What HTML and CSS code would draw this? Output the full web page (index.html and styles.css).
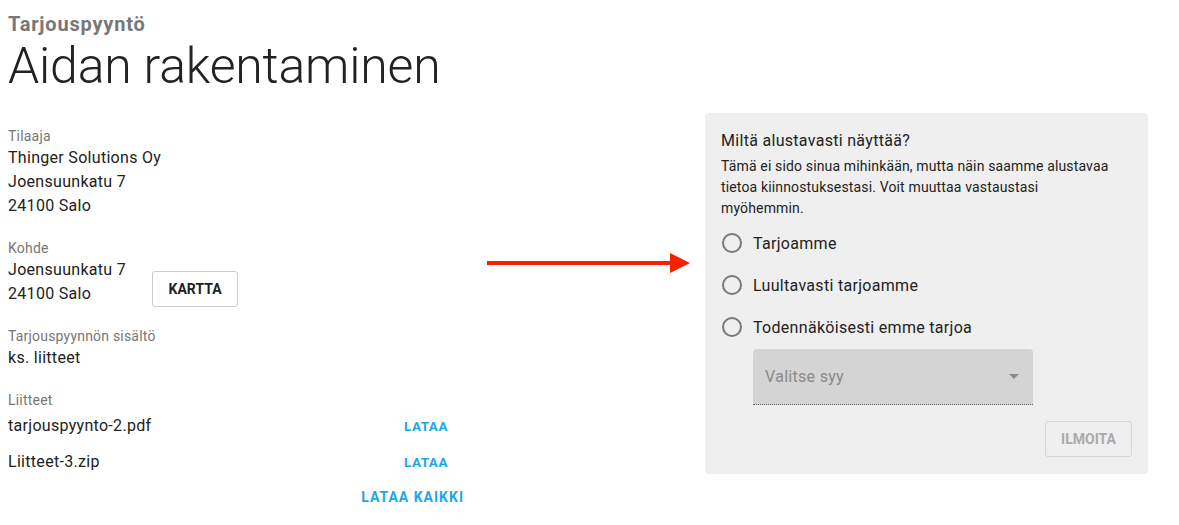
FILE: index.html
```html
<!DOCTYPE html>
<html lang="fi">
<head>
<meta charset="utf-8">
<title>Tarjouspyyntö</title>
<link rel="stylesheet" href="styles.css">
</head>
<body>
<header class="head">
  <div class="kicker">Tarjouspyyntö</div>
  <h1 class="title">Aidan rakentaminen</h1>
</header>
<main class="layout">
  <section class="details">
    <div class="block">
      <div class="label">Tilaaja</div>
      <div class="value">Thinger Solutions Oy</div>
      <div class="value">Joensuunkatu 7</div>
      <div class="value">24100 Salo</div>
    </div>
    <div class="block">
      <div class="label">Kohde</div>
      <div class="row-addr">
        <div>
          <div class="value">Joensuunkatu 7</div>
          <div class="value">24100 Salo</div>
        </div>
        <button class="btn-outline">KARTTA</button>
      </div>
    </div>
    <div class="block">
      <div class="label">Tarjouspyynnön sisältö</div>
      <div class="value">ks. liitteet</div>
    </div>
    <div class="block files">
      <div class="label">Liitteet</div>
      <div class="file"><span class="value">tarjouspyynto-2.pdf</span><a class="link">LATAA</a></div>
      <div class="file"><span class="value">Liitteet-3.zip</span><a class="link">LATAA</a></div>
      <div class="file all"><a class="link">LATAA KAIKKI</a></div>
    </div>
  </section>
  <div class="arrow-col">
    <svg class="arrow" width="204" height="22" viewBox="0 0 204 22">
      <rect x="0" y="9" width="184" height="4" fill="#f42200"/>
      <polygon points="183,1 203,11 183,21" fill="#f42200"/>
    </svg>
  </div>
  <aside class="panel">
    <h2 class="panel-title">Miltä alustavasti näyttää?</h2>
    <p class="panel-text">Tämä ei sido sinua mihinkään, mutta näin saamme alustavaa tietoa kiinnostuksestasi. Voit muuttaa vastaustasi myöhemmin.</p>
    <div class="options">
      <label class="opt"><span class="radio"></span>Tarjoamme</label>
      <label class="opt"><span class="radio"></span>Luultavasti tarjoamme</label>
      <label class="opt"><span class="radio"></span>Todennäköisesti emme tarjoa</label>
    </div>
    <div class="select">
      <span>Valitse syy</span>
      <span class="caret"></span>
    </div>
    <div class="actions">
      <button class="btn-disabled">ILMOITA</button>
    </div>
  </aside>
</main>
</body>
</html>
```

FILE: styles.css
```css
* { box-sizing: border-box; }
body {
  margin: 0;
  padding: 0 8px;
  font-family: Roboto, "Liberation Sans", sans-serif;
  color: #222;
  background: #fff;
}
.head { padding-top: 11px; }
.kicker {
  font-size: 20px;
  font-weight: 700;
  color: #777;
  line-height: 26px;
  letter-spacing: 0.8px;
}
.title {
  margin: 0;
  font-size: 50px;
  font-weight: 300;
  line-height: 58px;
  color: #222;
  letter-spacing: -0.2px;
}
.layout {
  display: flex;
  align-items: flex-start;
  margin-top: 18px;
}
.details {
  width: 456px;
  padding-top: 13px;
}
.block { margin-bottom: 20px; }
.label {
  font-size: 14px;
  color: #777;
  line-height: 20px;
  letter-spacing: 0.2px;
}
.value {
  font-size: 16px;
  line-height: 24px;
  color: #222;
  letter-spacing: 0.3px;
}
.row-addr {
  display: flex;
  align-items: flex-end;
  gap: 26px;
}
.btn-outline {
  font-family: inherit;
  font-size: 14px;
  font-weight: 700;
  color: #222;
  background: #fff;
  border: 1px solid #ccc;
  border-radius: 3px;
  width: 86px;
  height: 36px;
  margin-bottom: -1px;
}
.files .label { margin-bottom: -2px; }
.files .file {
  display: flex;
  justify-content: space-between;
  align-items: center;
  height: 36px;
}
.files .file .link { margin-right: 16px; }
.files .file.all { justify-content: flex-end; height: 34px; }
.files .file.all .link { margin-right: 0; font-size: 14px; letter-spacing: 1px; }
.link {
  color: #1da7e8;
  font-weight: 700;
  font-size: 13.5px;
  letter-spacing: 0.5px;
}
.arrow-col {
  width: 241px;
  padding-top: 139px;
  padding-left: 23px;
}
.arrow { display: block; }
.panel {
  width: 443px;
  background: #efefef;
  border-radius: 4px;
  padding: 16px 16px 17px 16px;
}
.panel-title {
  margin: 0;
  font-size: 16px;
  font-weight: 400;
  line-height: 24px;
  letter-spacing: 0.3px;
}
.panel-text {
  margin: 3px 0 3px;
  font-size: 14px;
  line-height: 21px;
  width: 398px;
  letter-spacing: 0.15px;
}
.options { display: flex; flex-direction: column; }
.opt {
  display: flex;
  align-items: center;
  gap: 11px;
  height: 42px;
  font-size: 16px;
  letter-spacing: 0.3px;
}
.radio {
  width: 20px;
  height: 20px;
  border: 2px solid #777;
  border-radius: 50%;
  margin-left: 1px;
}
.select {
  margin: 1px 0 0 32px;
  width: 280px;
  height: 56px;
  background: #d4d4d4;
  border-radius: 4px 4px 0 0;
  border-bottom: 1px dotted #666;
  display: flex;
  align-items: center;
  justify-content: space-between;
  padding: 0 12px;
  font-size: 16px;
  color: #8a8a8a;
  letter-spacing: 0.3px;
}
.caret {
  width: 0; height: 0;
  border-left: 5px solid transparent;
  border-right: 5px solid transparent;
  border-top: 5px solid #8a8a8a;
  margin-right: 2px;
}
.actions {
  display: flex;
  justify-content: flex-end;
  margin-top: 16px;
}
.btn-disabled {
  font-family: inherit;
  font-size: 14px;
  font-weight: 700;
  color: #aaa;
  background: transparent;
  border: 1px solid #d6d6d6;
  border-radius: 3px;
  width: 87px;
  height: 36px;
}
```
